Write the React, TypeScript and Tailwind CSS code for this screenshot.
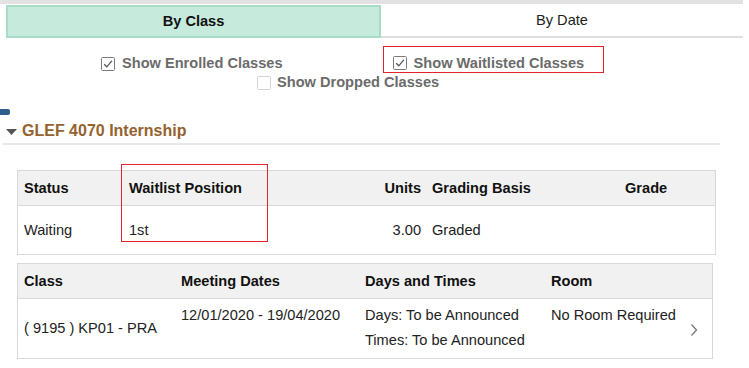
import React from "react"

const Check = ({ checked, disabled }: { checked?: boolean; disabled?: boolean }) => (
    <svg width="14" height="14" viewBox="0 0 14 14" className="shrink-0">
        <rect x="0.5" y="0.5" width="13" height="13" rx="1" fill="#fff" stroke={disabled ? "#d4d4d4" : "#7a7a7a"} />
        {checked && <path d="M3.2 7.2 L5.8 9.8 L10.8 3.8" fill="none" stroke="#555" strokeWidth="1.3" />}
    </svg>
)

const App = () => {
    return (
        <div className="relative w-[749px] h-[368px] overflow-hidden bg-white text-[#222] font-['Liberation_Sans',Arial,sans-serif]">
            {/* tabs */}
            <div className="w-[743px] border-t-[4px] border-[#e2e2e2] flex pl-[6px] pt-[1px]">
                <div className="w-[375px] h-[33px] bg-[#c6eadb] border-2 border-[#a9dcc6] flex items-center justify-center font-bold text-[14.6px] text-[#111]">
                    By Class
                </div>
                <div className="flex-1 h-[33px] border-b-2 border-[#dedede] flex items-center justify-center text-[14.6px] text-[#222]">
                    By Date
                </div>
            </div>

            {/* filters */}
            <div className="flex mt-[8px] text-[14.6px] leading-[17px] font-bold text-[#6b6b6b]">
                <div className="ml-[101px] h-[27px] flex items-center gap-[7px] pt-[8px]">
                    <Check checked />
                    <span>Show Enrolled Classes</span>
                </div>
                <div className="ml-[100px] h-[27px] border border-solid border-[color:#e0262b] flex items-center gap-[7px] pl-[9px] pr-[19px] pt-[7px]">
                    <Check checked />
                    <span>Show Waitlisted Classes</span>
                </div>
            </div>
            <div className="flex items-center gap-[6px] ml-[257px] mt-[1px] text-[14.6px] leading-[17px] font-bold text-[#6b6b6b]">
                <Check disabled />
                <span>Show Dropped Classes</span>
            </div>

            {/* section heading */}
            <div className="mt-[18px] w-[10px] h-[6px] bg-[#2f5c8a] rounded-br-[2px] rounded-tr-[2px]" />
            <div className="ml-[3px] w-[717px] mt-[6px] border-b-2 border-[#e8e8e8] pb-[2px] flex items-center gap-[4px] leading-[20px]">
                <svg width="12" height="8" viewBox="0 0 12 8" className="ml-[3px] mt-[1px]">
                    <path d="M0 1 L11 1 L5.5 7 Z" fill="#555" />
                </svg>
                <span className="text-[16px] font-bold text-[#93632f]">GLEF 4070 Internship</span>
            </div>

            {/* status table */}
            <div className="ml-[17px] mt-[25px] w-[699px] border border-[#d9d9d9] text-[14.6px] leading-[17px]">
                <div className="grid grid-cols-[104px_200px_103px_194px_1fr] h-[35px] items-center bg-[#f1f1f1] border-b border-[#d9d9d9] font-bold text-[#111]">
                    <div className="pl-[6px]">Status</div>
                    <div className="pl-[7px]">Waitlist Position</div>
                    <div className="text-right pr-[4px]">Units</div>
                    <div className="pl-[7px]">Grading Basis</div>
                    <div className="pl-[6px]">Grade</div>
                </div>
                <div className="grid grid-cols-[104px_200px_103px_194px_1fr] h-[48px] items-center">
                    <div className="pl-[6px]">Waiting</div>
                    <div className="pl-[7px]">1st</div>
                    <div className="text-right pr-[4px]">3.00</div>
                    <div className="pl-[7px]">Graded</div>
                    <div />
                </div>
            </div>

            {/* class table */}
            <div className="ml-[17px] mt-[8px] w-[696px] border border-[#d9d9d9] text-[14.6px] leading-[17px]">
                <div className="grid grid-cols-[157px_184px_186px_1fr] h-[35px] items-center bg-[#f1f1f1] border-b border-[#d9d9d9] font-bold text-[#111]">
                    <div className="pl-[6px]">Class</div>
                    <div className="pl-[6px]">Meeting Dates</div>
                    <div className="pl-[6px]">Days and Times</div>
                    <div className="pl-[6px]">Room</div>
                </div>
                <div className="grid grid-cols-[157px_184px_186px_1fr] h-[59px] leading-[25px]">
                    <div className="pl-[6px] flex items-center">( 9195 ) KP01 - PRA</div>
                    <div className="pl-[6px] pt-[4px]">12/01/2020 - 19/04/2020</div>
                    <div className="pl-[6px] pt-[4px]">
                        <div>Days: To be Announced</div>
                        <div>Times: To be Announced</div>
                    </div>
                    <div className="pl-[6px] pt-[4px] flex justify-between">
                        <span>No Room Required</span>
                        <svg width="8" height="14" viewBox="0 0 8 14" className="mt-[20px] mr-[14px]">
                            <path d="M1.5 1.5 L6.5 7 L1.5 12.5" fill="none" stroke="#777" strokeWidth="1.3" />
                        </svg>
                    </div>
                </div>
            </div>

            {/* annotation box */}
            <div className="absolute left-[121px] top-[164px] w-[147px] h-[78px] border border-solid border-[color:#e0262b]" />
        </div>
    )
}

export default App
